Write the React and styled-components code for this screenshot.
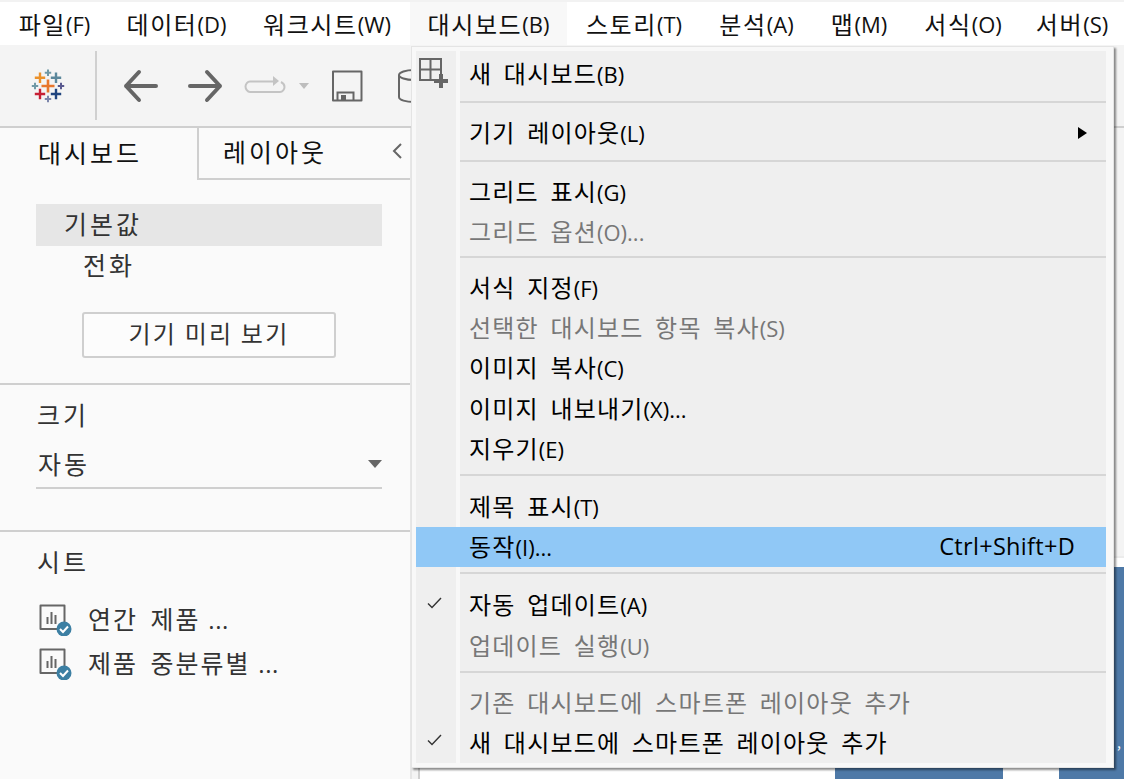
import React from 'react';
import styled, { createGlobalStyle } from 'styled-components';

const KR = `"Noto Sans CJK KR", "Noto Sans", sans-serif`;

const GlobalStyle = createGlobalStyle`
  html, body { margin: 0; padding: 0; background: #fff; }
  body { font-family: ${KR}; }
`;

const Page = styled.div`
  position: relative;
  width: 1124px;
  height: 779px;
  overflow: hidden;
  background: #fff;
`;

const MenuBar = styled.div`
  display: flex;
  height: 43px;
  padding-top: 2px;
  background: #fff;
  box-shadow: inset 0 2px 0 #f2f2f2;
  font-size: 24px;
  letter-spacing: 1.6px;
  color: #111;
`;

const MenuBarItem = styled.div`
  display: flex;
  align-items: center;
  justify-content: center;
  width: ${p => p.$w}px;
  flex: none;
  background: ${p => (p.$open ? '#f8f8f8' : 'transparent')};
  white-space: nowrap;
`;

// accelerators like (F) are set a little smaller than the hangul
const Acc = styled.span`
  font-family: "Open Sans", "Noto Sans", sans-serif;
  font-size: 22px;
  letter-spacing: 0;
`;

const Toolbar = styled.div`
  display: flex;
  align-items: center;
  height: 81px;
  background: #f4f4f4;
  overflow: hidden;
`;

const LogoCell = styled.div`
  display: flex;
  align-items: center;
  justify-content: center;
  width: 95px;
  height: 69px;
  border-right: 2px solid #d0d0d0;
  flex: none;
`;

const ToolIcon = styled.svg`
  flex: none;
  margin-left: ${p => p.$ml || 0}px;
`;

const Main = styled.div`
  display: flex;
  height: 653px;
  border-top: 2px solid #cfcfcf;
`;

const Sidebar = styled.div`
  width: 410px;
  flex: none;
  background: #fafafa;
  border-right: 2px solid #e6e6e6;
  color: #333;
  font-size: 25px;
  letter-spacing: 3px;
  word-spacing: 5px;
`;

const Tabs = styled.div`
  display: flex;
  height: 52px;
`;

const Tab = styled.div`
  display: flex;
  align-items: center;
  height: 100%;
  box-sizing: border-box;
  padding: 0 0 4px ${p => p.$pl}px;
  color: #111;
  ${p => p.$inactive ? 'flex: 1; border-left: 2px solid #cfcfcf; border-bottom: 2px solid #cfcfcf; justify-content: space-between; padding-right: 7px;' : 'width: 197px;'}
`;

const Section = styled.div`
  box-sizing: border-box;
  height: ${p => p.$h}px;
  padding: ${p => p.$pt}px 28px 0 36px;
  border-bottom: ${p => (p.$line ? '2px solid #cfcfcf' : 'none')};
`;

const DeviceRow = styled.div`
  display: flex;
  align-items: center;
  box-sizing: border-box;
  height: ${p => (p.$active ? 42 : 40)}px;
  padding: 0 0 4px ${p => (p.$active ? 28 : 47)}px;
  background: ${p => (p.$active ? '#e6e6e6' : 'transparent')};
`;

const PreviewButton = styled.div`
  display: flex;
  align-items: center;
  justify-content: center;
  box-sizing: border-box;
  width: 254px;
  height: 46px;
  margin: 26px 0 0 46px;
  padding-bottom: 5px;
  border: 2px solid #cfcfcf;
  border-radius: 3px;
  background: #fcfcfc;
  font-size: 24px;
  letter-spacing: 2.2px;
  word-spacing: 0;
`;

const SectionTitle = styled.div`
  display: flex;
  align-items: center;
  box-sizing: border-box;
  height: 32px;
  padding: 0 0 4px 1px;
`;

const SizeSelect = styled.div`
  display: flex;
  align-items: center;
  justify-content: space-between;
  height: 44px;
  margin-top: 9px;
  padding: 0 0 2px 2px;
  border-bottom: 2px solid #cfcfcf;
`;

const Caret = styled.div`
  width: 0;
  height: 0;
  margin-top: 2px;
  border-left: 7px solid transparent;
  border-right: 7px solid transparent;
  border-top: 8px solid #666;
`;

const SheetList = styled.div`
  margin-top: 19px;
  padding-left: 3px;
`;

const SheetRow = styled.div`
  display: flex;
  align-items: center;
  height: 44px;
  gap: 15px;
  white-space: nowrap;
  letter-spacing: 2px;
`;

const SheetName = styled.span`
  margin-bottom: 4px;
`;

const Dots = styled.span`
  font-family: "Open Sans", "Noto Sans", sans-serif;
  font-size: 24px;
  letter-spacing: 0.5px;
  word-spacing: 1px;
`;

const Canvas = styled.div`
  flex: 1;
  display: flex;
  flex-direction: column;
  justify-content: flex-end;
  background: #f4f4f4;
  padding-left: 6px;
`;

const Sheet = styled.div`
  display: flex;
  align-items: flex-end;
  height: 223px;
  padding-left: 415px;
  gap: 56px;
  background: #fff;
  border-left: 2px solid #cfcfcf;
  border-top: 2px solid #ececec;
`;

const Bar = styled.div`
  position: relative;
  width: ${p => p.$w}px;
  height: 214px;
  flex: none;
  background: #4e79a7;
`;

const BarTick = styled.span`
  position: absolute;
  left: 58px;
  top: 168px;
  color: #fff;
  font-size: 14px;
  line-height: 14px;
`;

const Menu = styled.div`
  position: absolute;
  left: 411px;
  top: 46px;
  width: 703px;
  height: 722px;
  box-sizing: border-box;
  padding: 4px 7px 4px 4px;
  background: #f8f8f8;
  border: 1px solid #e4e4e4;
  box-shadow: 2px 2px 2px rgba(0, 0, 0, 0.45);
  color: #000;
  font-size: 24px;
  letter-spacing: 1.2px;
  word-spacing: 5px;
`;

const Row = styled.div`
  display: flex;
  gap: 4px;
  height: ${p => p.$h || 40.2}px;
  background: ${p => (p.$hover ? '#90c8f6' : 'transparent')};
`;

const Gutter = styled.div`
  display: flex;
  align-items: center;
  justify-content: center;
  width: 40px;
  flex: none;
  background: ${p => (p.$hover ? 'transparent' : '#efefef')};
`;

const RowBody = styled.div`
  flex: 1;
  display: flex;
  align-items: center;
  justify-content: space-between;
  padding: 0 31px 3px 9px;
  background: ${p => (p.$hover ? 'transparent' : '#efefef')};
  color: ${p => (p.$off ? '#777' : '#000')};
  white-space: nowrap;
`;

const SepLine = styled.div`
  flex: 1;
  background: #efefef;
  padding-top: ${p => p.$at}px;
  &::after {
    content: '';
    display: block;
    height: 2px;
    background: #d6d6d6;
  }
`;

const Shortcut = styled.span`
  font-family: "Open Sans", "Noto Sans", sans-serif;
  font-size: 23.5px;
  letter-spacing: 0.3px;
`;

const SubArrow = styled.div`
  width: 0;
  height: 0;
  margin: 4px -12px 0 0;
  border-top: 6px solid transparent;
  border-bottom: 6px solid transparent;
  border-left: 9px solid #000;
`;

const NewDashSvg = styled.svg`
  flex: none;
  margin: -2px 0 0 -4px;
`;

const SheetSvg = styled.svg`
  flex: none;
`;

const CheckSvg = styled.svg`
  flex: none;
  margin: -5px 0 0 -4px;
`;

const Crosses = [
  [17, 17, 6.5, 2.6, '#e8762c'],
  [9, 8.7, 5.2, 2.4, '#eb912b'],
  [25, 8.7, 5.2, 2.4, '#5b879b'],
  [17, 3.7, 3.2, 2, '#7099a6'],
  [4, 17, 3.2, 2, '#7099a6'],
  [30, 17, 3.2, 2, '#59598f'],
  [9, 25, 5.2, 2.4, '#c72035'],
  [25, 25, 5.2, 2.4, '#1f447e'],
  [17, 30, 3.2, 2, '#7c86ac'],
];

const TableauLogo = () => (
  <svg width="34" height="34" viewBox="0 0 34 34">
    {Crosses.map(([x, y, r, t, c], i) => (
      <path key={i} d={`M${x - r} ${y}H${x + r}M${x} ${y - r}V${y + r}`} stroke={c} strokeWidth={t} fill="none" />
    ))}
  </svg>
);

const BackIcon = () => (
  <ToolIcon $ml={26} width="36" height="34" viewBox="0 0 36 34" fill="none" stroke="#666" strokeWidth="4" strokeLinecap="round" strokeLinejoin="round">
    <path d="M33 17H3M16 3L3 17L16 31" />
  </ToolIcon>
);

const ForwardIcon = () => (
  <ToolIcon $ml={28} width="36" height="34" viewBox="0 0 36 34" fill="none" stroke="#666" strokeWidth="4" strokeLinecap="round" strokeLinejoin="round">
    <path d="M3 17H33M20 3L33 17L20 31" />
  </ToolIcon>
);

const RedoIcon = () => (
  <ToolIcon $ml={21} width="42" height="24" viewBox="0 0 42 24" fill="none">
    <path d="M30 7.5H6C3.5 7.5 1.5 10 1.5 12.5S3.5 18 6 18H36C38.5 18 40.5 15.5 40.5 13S39 9 37 8" stroke="#c4c4c4" strokeWidth="2" />
    <path d="M29 2L35 7L29 12Z" fill="#c4c4c4" />
  </ToolIcon>
);

const SmallCaret = () => (
  <ToolIcon $ml={12} width="12" height="8" viewBox="0 0 12 8">
    <path d="M1 1H11L6 7Z" fill="#bdbdbd" />
  </ToolIcon>
);

const SaveIcon = () => (
  <ToolIcon $ml={21} width="32" height="32" viewBox="0 0 32 32" fill="none" stroke="#666" strokeWidth="2">
    <path d="M2 1.5H30.5V30.5H2Z" strokeLinejoin="round" />
    <path d="M6.5 30V22.5H22.5V30" />
    <path d="M10 30V25H15V30Z" fill="#666" stroke="none" />
  </ToolIcon>
);

const DbIcon = () => (
  <ToolIcon $ml={34} width="34" height="36" viewBox="0 0 34 36" fill="none" stroke="#666" strokeWidth="2">
    <ellipse cx="17" cy="7" rx="15" ry="5" />
    <path d="M2 7V29C2 32 9 34 17 34S32 32 32 29V7" />
  </ToolIcon>
);

const ChevronLeft = () => (
  <svg width="12" height="18" viewBox="0 0 12 18" fill="none" stroke="#666" strokeWidth="2">
    <path d="M10 2L3 9L10 16" />
  </svg>
);

const SheetIcon = () => (
  <SheetSvg width="34" height="32" viewBox="0 0 34 32" fill="none">
    <path d="M24 25H1.5V1.5H25.5V20" stroke="#666" strokeWidth="2" strokeLinejoin="round" />
    <path d="M8.5 20V13M12.5 20V8M16.5 20V11" stroke="#666" strokeWidth="2" />
    <circle cx="25" cy="25" r="7.5" fill="#3c7fa3" />
    <path d="M21 25L24 28L29 22.5" stroke="#fff" strokeWidth="2" />
  </SheetSvg>
);

const NewDashIcon = () => (
  <NewDashSvg width="32" height="32" viewBox="0 0 32 32" fill="none">
    <path d="M2 2H23V23H2ZM12.5 2V23M2 12.5H23" stroke="#666" strokeWidth="2" />
    <path d="M23 17V31M16 24H30" stroke="#666" strokeWidth="4" />
  </NewDashSvg>
);

const CheckIcon = () => (
  <CheckSvg width="15" height="12" viewBox="0 0 15 12" fill="none" stroke="#333" strokeWidth="1.4">
    <path d="M1 6.5L5 10.5L14 1" />
  </CheckSvg>
);

const topMenus = [
  ['파일', '(F)', 109],
  ['데이터', '(D)', 135],
  ['워크시트', '(W)', 166],
  ['대시보드', '(B)', 157, true],
  ['스토리', '(T)', 134],
  ['분석', '(A)', 111],
  ['맵', '(M)', 94],
  ['서식', '(O)', 114],
  ['서버', '(S)', 104],
];

const Item = ({ label, acc, off, hover, shortcut, gutter, arrow, dots }) => (
  <Row $hover={hover}>
    <Gutter $hover={hover}>{gutter}</Gutter>
    <RowBody $hover={hover} $off={off}>
      <span>{label}<Acc>{acc}{dots}</Acc></span>
      {shortcut && <Shortcut>{shortcut}</Shortcut>}
      {arrow && <SubArrow />}
    </RowBody>
  </Row>
);

const Sep = ({ h, at }) => (
  <Row $h={h}>
    <Gutter />
    <SepLine $at={at} />
  </Row>
);

export default function App() {
  return (
    <Page>
      <GlobalStyle />
      <MenuBar>
        {topMenus.map(([label, acc, w, open]) => (
          <MenuBarItem key={label} $w={w} $open={open}>{label}<Acc>{acc}</Acc></MenuBarItem>
        ))}
      </MenuBar>
      <Toolbar>
        <LogoCell><TableauLogo /></LogoCell>
        <BackIcon />
        <ForwardIcon />
        <RedoIcon />
        <SmallCaret />
        <SaveIcon />
        <DbIcon />
      </Toolbar>
      <Main>
        <Sidebar>
          <Tabs>
            <Tab $pl={38}>대시보드</Tab>
            <Tab $inactive $pl={24}>레이아웃<ChevronLeft /></Tab>
          </Tabs>
          <Section $h={205} $pt={24} $line>
            <DeviceRow $active>기본값</DeviceRow>
            <DeviceRow>전화</DeviceRow>
            <PreviewButton>기기 미리 보기</PreviewButton>
          </Section>
          <Section $h={147} $pt={15} $line>
            <SectionTitle>크기</SectionTitle>
            <SizeSelect>자동<Caret /></SizeSelect>
          </Section>
          <Section $h={200} $pt={15}>
            <SectionTitle>시트</SectionTitle>
            <SheetList>
              <SheetRow><SheetIcon /><SheetName>연간 제품<Dots> ...</Dots></SheetName></SheetRow>
              <SheetRow><SheetIcon /><SheetName>제품 중분류별<Dots> ...</Dots></SheetName></SheetRow>
            </SheetList>
          </Section>
        </Sidebar>
        <Canvas>
          <Sheet>
            <Bar $w={168} />
            <Bar $w={80}><BarTick>,</BarTick></Bar>
          </Sheet>
        </Canvas>
      </Main>
      <Menu>
        <Sep h={3} at={4} />
        <Item label="새 대시보드" acc="(B)" gutter={<NewDashIcon />} />
        <Sep h={18.6} at={7} />
        <Item label="기기 레이아웃" acc="(L)" arrow />
        <Sep h={18.6} at={7} />
        <Item label="그리드 표시" acc="(G)" />
        <Item label="그리드 옵션" acc="(O)" dots="..." off />
        <Sep h={16} at={4} />
        <Item label="서식 지정" acc="(F)" />
        <Item label="선택한 대시보드 항목 복사" acc="(S)" off />
        <Item label="이미지 복사" acc="(C)" />
        <Item label="이미지 내보내기" acc="(X)" dots="..." />
        <Item label="지우기" acc="(E)" />
        <Sep h={18} at={5} />
        <Item label="제목 표시" acc="(T)" />
        <Item label="동작" acc="(I)" dots="..." hover shortcut="Ctrl+Shift+D" />
        <Sep h={18} at={5} />
        <Item label="자동 업데이트" acc="(A)" gutter={<CheckIcon />} />
        <Item label="업데이트 실행" acc="(U)" off />
        <Sep h={17} at={5} />
        <Item label="기존 대시보드에 스마트폰 레이아웃 추가" off />
        <Item label="새 대시보드에 스마트폰 레이아웃 추가" gutter={<CheckIcon />} />
      </Menu>
    </Page>
  );
}
